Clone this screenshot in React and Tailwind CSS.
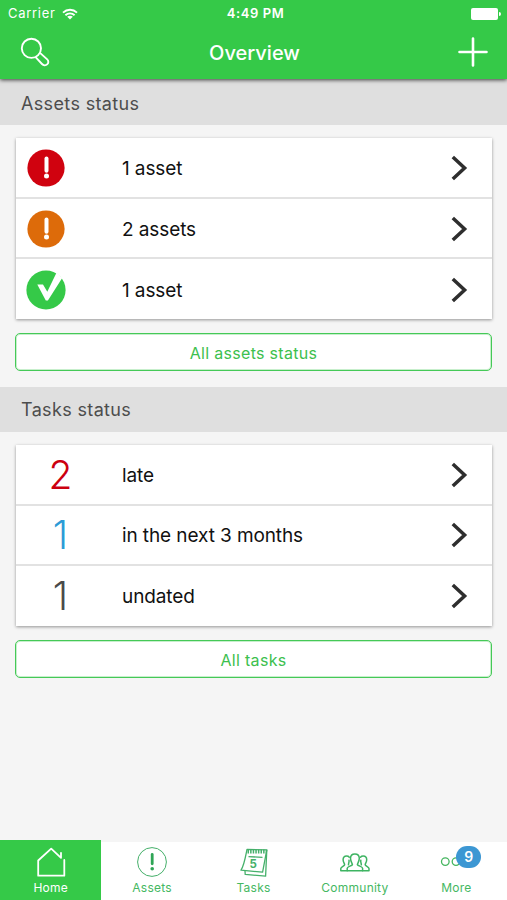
import clsx from "clsx";

const ASSETS = [
  { label: "1 asset", icon: <AlertIcon color="#d0020f" /> },
  { label: "2 assets", icon: <AlertIcon color="#dd6b0a" /> },
  { label: "1 asset", icon: <CheckIcon /> },
];

const TASKS = [
  { label: "late", icon: <Count value="2" className="text-[#cc0010]" /> },
  {
    label: "in the next 3 months",
    icon: <Count value="1" className="text-[#2c9bd6]" />,
  },
  { label: "undated", icon: <Count value="1" className="text-[#4a4a4a]" /> },
];

const TABS = [
  { label: "Home", icon: <HomeIcon />, active: true },
  { label: "Assets", icon: <AssetsIcon /> },
  { label: "Tasks", icon: <TasksIcon /> },
  { label: "Community", icon: <CommunityIcon /> },
  { label: "More", icon: <MoreIcon />, badge: 9 },
];

function AlertIcon({ color }) {
  return (
    <svg width="40" height="40" viewBox="0 0 40 40" className="ml-[10px]">
      <circle cx="20" cy="20" r="18.6" fill={color} />
      <path
        d="M20.5 10.6V22.8"
        stroke="#fff"
        strokeWidth="4"
        strokeLinecap="round"
      />
      <circle cx="20.5" cy="28" r="2.5" fill="#fff" />
    </svg>
  );
}

function CheckIcon() {
  return (
    <svg width="40" height="40" viewBox="0 0 40 40" className="ml-[10px]">
      <circle cx="20" cy="20" r="19.6" fill="#35c948" />
      <path
        d="M11.3 14.4H17L21.3 21.8L30.6 2.6L36.2 8L21.9 30.6H19.8Z"
        fill="#fff"
      />
    </svg>
  );
}

function Count({ value, className }) {
  return (
    <span
      className={clsx(
        "w-[89px] text-center text-[39px] leading-[44px] font-[350]",
        className,
      )}
    >
      {value}
    </span>
  );
}

function HomeIcon() {
  return (
    <svg
      width="32"
      height="32"
      viewBox="0 0 32 32"
      fill="none"
      stroke="#fff"
      strokeWidth="1.8"
    >
      <path
        d="M29.3 14V29.7H3.2V14.5L16.2 2.7L26 11.8V6.8"
        strokeLinecap="round"
        strokeLinejoin="round"
      />
    </svg>
  );
}

function AssetsIcon() {
  return (
    <svg width="32" height="32" viewBox="0 0 32 32" fill="none">
      <circle cx="16" cy="16" r="14.4" stroke="#45b06a" strokeWidth="1" />
      <path
        d="M16.2 8.4V17.8"
        stroke="#2fa556"
        strokeWidth="2.8"
        strokeLinecap="round"
      />
      <circle cx="16.2" cy="22.7" r="1.8" fill="#2fa556" />
    </svg>
  );
}

function TasksIcon() {
  return (
    <svg
      width="32"
      height="32"
      viewBox="0 0 32 32"
      fill="none"
      stroke="#45b06a"
      strokeWidth="1.3"
      strokeLinejoin="round"
    >
      <path d="M9 3.5L28.8 3.8L24.6 26.2L3 24.2C6 20 7.5 11 9 3.5Z" />
      <path d="M28.8 3.8L27.6 30.2L7.2 28.4L7 25" />
      <path d="M9.5 5.5H28" strokeWidth="4.2" strokeDasharray="1.5 1.1" />
      <path d="M10.5 10.7L24.5 11.3" />
      <text
        x="15.4"
        y="22"
        textAnchor="middle"
        fontSize="11.5"
        fontWeight="700"
        fill="#45b06a"
        stroke="none"
      >
        5
      </text>
    </svg>
  );
}

function CommunityIcon() {
  return (
    <svg
      width="32"
      height="32"
      viewBox="0 0 32 32"
      fill="none"
      stroke="#3eb462"
      strokeWidth="1.5"
      strokeLinejoin="round"
      strokeLinecap="round"
    >
      <path d="M8.2 24.8V22.3C8.2 20.6 12.8 20 13.4 18.6C13.6 17.6 11.5 15.8 11.5 12.3C11.5 9.6 13.3 7.9 15.9 7.9C18.5 7.9 20.3 9.6 20.3 12.3C20.3 15.8 18.2 17.6 18.4 18.6C19 20 23.6 20.6 23.6 22.3V24.8" />
      <path d="M10.3 11.2C9.6 10.3 8.6 10 7.6 10C5.5 10 4.1 11.5 4.1 13.8C4.1 16.4 5.8 17.7 5.6 18.8C5.2 20.2 1.8 20.7 1.8 22.6V24.8H30V22.6C30 20.7 26.6 20.2 26.2 18.8C26 17.7 27.7 16.4 27.7 13.8C27.7 11.5 26.3 10 24.2 10C23.2 10 22.2 10.3 21.5 11.2" />
      <path d="M10 14.2C10.4 16.4 9.3 17.6 9.5 18.8M21.8 14.2C21.4 16.4 22.5 17.6 22.3 18.8" />
    </svg>
  );
}

function MoreIcon() {
  return (
    <svg
      width="32"
      height="32"
      viewBox="0 0 32 32"
      fill="none"
      stroke="#45b55f"
      strokeWidth="1.3"
    >
      <circle cx="5.3" cy="15.6" r="3.8" />
      <circle cx="16" cy="15.6" r="3.8" />
      <circle cx="26.7" cy="15.6" r="3.8" />
    </svg>
  );
}

function StatusBar() {
  return (
    <div className="grid h-[27px] grid-cols-3 items-center pr-[6px] pl-[8px] text-[13px]">
      <div className="flex items-center gap-[6px] tracking-[0.7px]">
        Carrier
        <svg width="16" height="12" viewBox="0 0 16 12" fill="none">
          <path
            d="M1 4.6C5 .8 11 .8 15 4.6M3.4 7.2C6 4.8 10 4.8 12.6 7.2"
            stroke="#fff"
            strokeWidth="1.9"
          />
          <path d="M5.2 8.7C6.8 7.3 9.2 7.3 10.8 8.7L8 11.5Z" fill="#fff" />
        </svg>
      </div>
      <div className="pt-px pl-[2px] text-center font-semibold tracking-[0.6px]">
        4:49 PM
      </div>
      <div className="flex items-center justify-end gap-px">
        <span className="h-[12px] w-[27px] rounded-[2px] bg-white" />
        <span className="h-[4px] w-[2px] rounded-r-full bg-white" />
      </div>
    </div>
  );
}

function NavBar() {
  return (
    <div className="flex h-[52px] items-center justify-between pr-[19px] pl-[20px]">
      <svg
        width="30"
        height="30"
        viewBox="0 0 30 30"
        fill="none"
        stroke="#fff"
        strokeWidth="1.9"
        strokeLinejoin="round"
        className="-mt-[2px]"
      >
        <circle cx="11.4" cy="11.3" r="9.6" />
        <path d="M15.6 20.2L22 27C23.4 28.5 25.7 28.7 27.1 27.4C28.7 26 28.7 23.8 27.2 22.4L20 15.9" />
      </svg>
      <h1 className="pl-px text-[20px] font-[450]">Overview</h1>
      <svg
        width="30"
        height="30"
        viewBox="0 0 30 30"
        stroke="#fff"
        strokeWidth="2.6"
        strokeLinecap="round"
        className="-mt-[2px]"
      >
        <path d="M15 1.5V28.5M1.5 15H28.5" />
      </svg>
    </div>
  );
}

function Section({ title, rows, action, className }) {
  return (
    <section>
      <h2
        className={clsx(
          "flex items-center bg-[#dfdfdf] pl-[21px] text-[18px] tracking-[0.35px] text-[#4d4d4d]",
          className,
        )}
      >
        {title}
      </h2>
      <div className="px-[15px] pt-[13px] pb-[16px]">
        <ul className="ml-px divide-y-2 divide-[#e2e2e2] bg-white shadow-[0_1px_3px_rgba(0,0,0,0.4)]">
          {rows.map((row, i) => (
            <li
              key={i}
              className="flex h-[60px] items-center pr-[24px] first:h-[61px]"
            >
              <div className="flex w-[106px] pt-px">{row.icon}</div>
              <span className="flex-1 pt-[4px] text-[19px] tracking-[-0.1px] text-[#111]">
                {row.label}
              </span>
              <svg
                width="18"
                height="26"
                viewBox="0 0 18 26"
                fill="none"
                stroke="#2e2e2e"
                strokeWidth="3.5"
                className="mt-px"
              >
                <path d="M2.8 2L14.6 13L2.8 24" />
              </svg>
            </li>
          ))}
        </ul>
        <button className="mt-[14px] flex h-[38px] w-full items-center justify-center rounded-[5px] border border-[#45c957] bg-white pt-[2px] text-[16px] tracking-[0.3px] text-[#3cc04e] shadow-[inset_0_0_0_1px_rgba(69,201,87,0.3)]">
          {action}
        </button>
      </div>
    </section>
  );
}

function TabBar() {
  return (
    <nav className="flex h-[60px] items-end">
      {TABS.map((tab) => (
        <a
          key={tab.label}
          className={clsx(
            "flex flex-1 flex-col items-center text-[12px] leading-[16px] tracking-[0.25px]",
            tab.active
              ? "h-[60px] bg-[#35c948] pt-[6px] text-white"
              : "h-[58px] bg-white pt-[4px] text-[#45b862]",
          )}
        >
          <span className="relative">
            {tab.icon}
            {tab.badge && (
              <span className="absolute top-0 left-[16px] flex h-[22px] w-[25px] items-center justify-center rounded-full bg-[#3c97d3] text-[14px] font-semibold tracking-normal text-white">
                {tab.badge}
              </span>
            )}
          </span>
          <span className="mt-[2px]">{tab.label}</span>
        </a>
      ))}
    </nav>
  );
}

export default function App() {
  return (
    <div className="flex h-[900px] w-[507px] flex-col bg-[#f5f5f5] font-['Inter',sans-serif]">
      <header className="relative z-10 h-[79px] bg-[#35c948] text-white shadow-[0_1px_4px_rgba(0,0,0,0.75)]">
        <StatusBar />
        <NavBar />
      </header>
      <main className="flex-1">
        <Section
          title="Assets status"
          rows={ASSETS}
          action="All assets status"
          className="h-[46px] pt-[3px]"
        />
        <Section
          title="Tasks status"
          rows={TASKS}
          action="All tasks"
          className="h-[44.5px] pt-px"
        />
      </main>
      <TabBar />
    </div>
  );
}
